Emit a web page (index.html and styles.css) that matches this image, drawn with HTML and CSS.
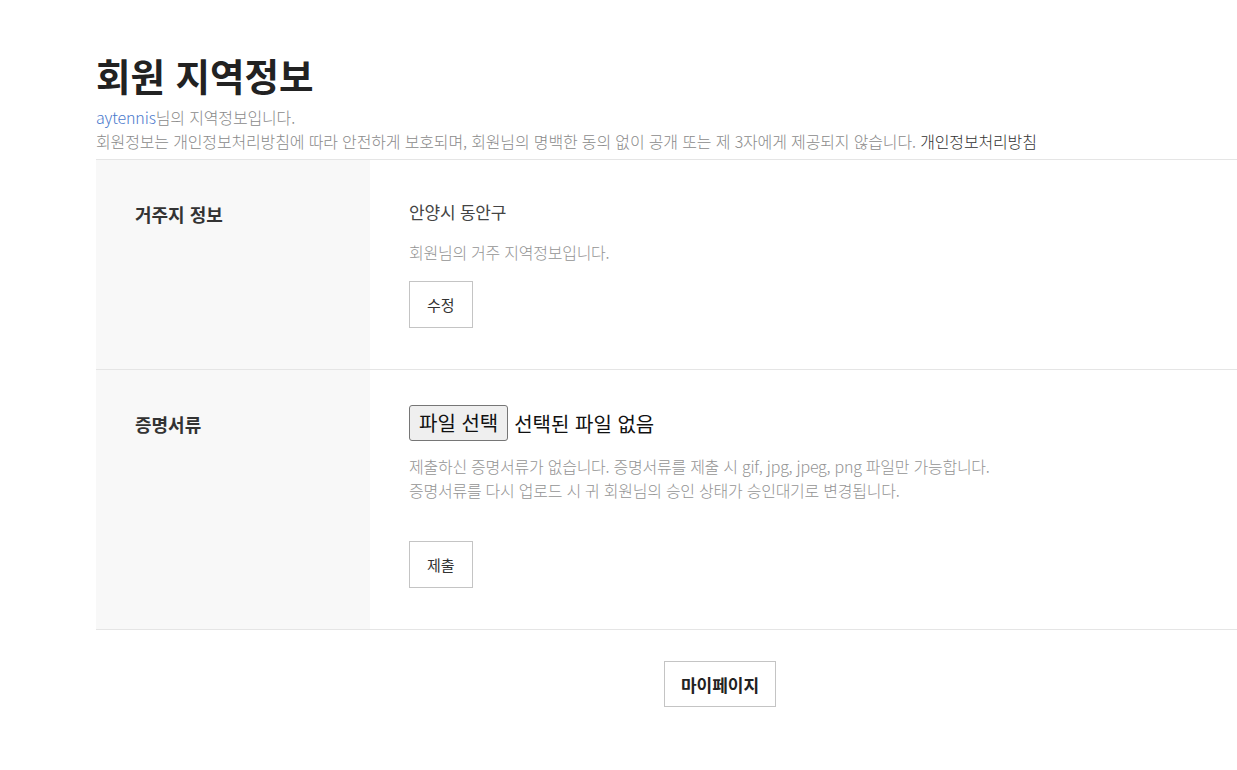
FILE: index.html
```html
<!DOCTYPE html>
<html lang="ko">
  <head>
    <meta charset="utf-8">
    <title>회원 지역정보</title>
    <link rel="stylesheet" href="styles.css">
  </head>
  <body>
    <div class="region-page">
      <div class="region-header">
        <h1 class="region-title">회원 지역정보</h1>
        <p class="region-intro">
          <span class="region-user">aytennis</span>님의 지역정보입니다.
        </p>
        <p class="region-intro">
          회원정보는 개인정보처리방침에 따라 안전하게 보호되며, 회원님의 명백한 동의 없이 공개 또는 제 3자에게 제공되지 않습니다.
          <a href="#" class="region-policy">개인정보처리방침</a>
        </p>
      </div>

      <div class="region-table">
        <div class="region-row">
          <div class="region-label">거주지 정보</div>
          <div class="region-cell">
            <div class="region-value">안양시 동안구</div>
            <p class="region-desc">회원님의 거주 지역정보입니다.</p>
            <button class="region-btn">수정</button>
          </div>
        </div>

        <div class="region-row">
          <div class="region-label">증명서류</div>
          <div class="region-cell file-cell">
            <label class="file-field">
              <input type="file" class="file-input" accept=".gif,.jpg,.jpeg,.png">
              <span class="file-btn">파일 선택</span>
              <span class="file-name">선택된 파일 없음</span>
            </label>
            <p class="region-desc">
              제출하신 증명서류가 없습니다. 증명서류를 제출 시 gif, jpg, jpeg, png 파일만 가능합니다.<br>
              증명서류를 다시 업로드 시 귀 회원님의 승인 상태가 승인대기로 변경됩니다.
            </p>
            <button class="region-btn submit-btn">제출</button>
          </div>
        </div>
      </div>

      <div class="region-footer">
        <button class="region-btn mypage-btn">마이페이지</button>
      </div>
    </div>
  </body>
</html>
```

FILE: styles.css
```css
/* Member region info page */
html,
body {
  margin: 0;
  padding: 0;
  overflow-x: hidden;
  background: #ffffff;
}

body {
  font-family: "Noto Sans CJK KR", "Noto Sans", sans-serif;
  color: #333333;
}

.region-page {
  width: 1248px;
  margin-left: 96px;
}

/* Header */
.region-header {
  padding-top: 50px;
  padding-bottom: 6px;
}

.region-title {
  margin: 0 0 5px;
  font-size: 37.5px;
  line-height: 50px;
  font-weight: 700;
  color: #222222;
}

.region-intro {
  margin: 0;
  font-size: 16px;
  line-height: 24px;
  font-weight: 300;
  color: #8a8a8a;
  letter-spacing: -0.15px;
}

.region-user {
  color: #4a78cc;
}

.region-policy {
  color: #333333;
  text-decoration: none;
}

/* Info table */
.region-table {
  border-top: 1px solid #e5e5e5;
}

.region-row {
  display: flex;
  border-bottom: 1px solid #e5e5e5;
}

.region-label {
  flex: 0 0 274px;
  box-sizing: border-box;
  padding: 40px 39px;
  background: #f8f8f8;
  font-size: 18px;
  line-height: 28px;
  font-weight: 700;
  color: #333333;
}

.region-cell {
  flex: 1;
  padding: 40px 39px 41px;
}

.region-cell.file-cell {
  padding-top: 35px;
}

.region-value {
  font-size: 17px;
  line-height: 24px;
  color: #444444;
  letter-spacing: -0.2px;
}

.region-desc {
  margin: 16px 0 17px;
  font-size: 16px;
  line-height: 24px;
  font-weight: 300;
  color: #949494;
  letter-spacing: -0.25px;
}

.file-cell .region-desc {
  margin: 13px 0 39px;
}

/* Buttons */
.region-btn {
  display: inline-block;
  height: 47px;
  padding: 0 17px;
  border: 1px solid #c4c4c4;
  background: #ffffff;
  font-family: inherit;
  font-size: 15px;
  color: #333333;
  cursor: pointer;
}

.region-btn:hover {
  border-color: #999999;
}

/* File picker */
.file-field {
  display: flex;
  align-items: center;
  gap: 6px;
  cursor: pointer;
}

.file-input {
  display: none;
}

.file-btn {
  box-sizing: border-box;
  height: 36px;
  padding: 0 9px;
  border: 1px solid #767676;
  border-radius: 3px;
  background: #efefef;
  font-size: 20px;
  line-height: 34px;
  color: #111111;
}

.file-name {
  font-size: 20px;
  color: #111111;
}

/* Footer */
.region-footer {
  display: flex;
  justify-content: center;
  padding-top: 31px;
  padding-bottom: 60px;
}

.mypage-btn {
  height: 46px;
  padding: 0 16px;
  font-size: 17px;
  font-weight: 700;
  color: #222222;
}
```
